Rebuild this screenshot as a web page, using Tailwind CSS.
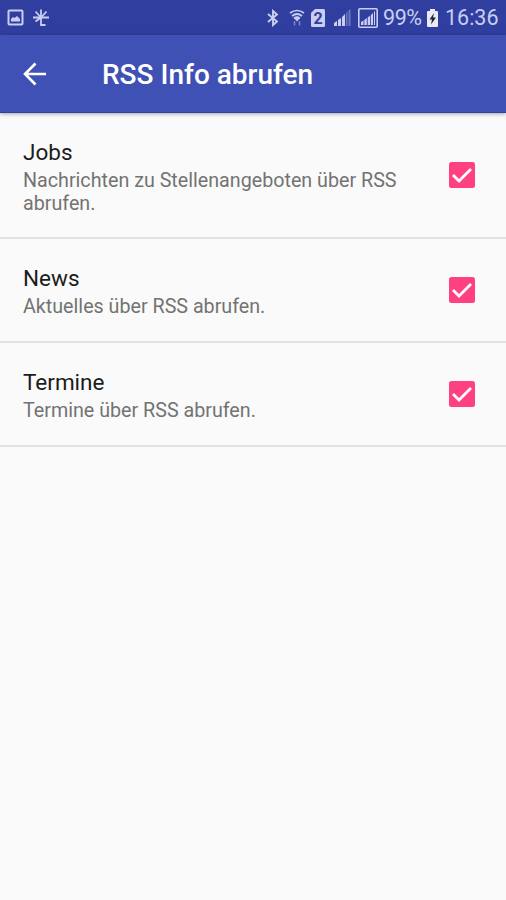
<!DOCTYPE html>
<html lang="de">
<head>
  <meta charset="UTF-8" />
  <meta name="viewport" content="width=device-width, initial-scale=1.0"/>
  <title>RSS Info abrufen</title>
  <script src="https://cdn.jsdelivr.net/npm/@tailwindcss/browser@4"></script>
</head>
<body class="bg-[#fafafa] h-screen overflow-hidden font-['Roboto',sans-serif]">

  <!-- Status Bar -->
  <div class="flex items-center h-[35px] bg-[#303f9f] pl-[7px] pr-[7px] text-[#c9cef0]">
    <svg class="w-[17px] h-[17px]" viewBox="0 0 17 17" fill="none" stroke="currentColor" stroke-width="2">
      <rect x="1.5" y="1.5" width="14" height="14" rx="1"/>
      <path d="M4 12.500V10l2-2 1.500 1L10 7l3 3v2.500z" fill="currentColor" stroke="none"/>
    </svg>
    <svg class="w-[18px] h-[18px] ml-2" viewBox="0 0 18 18" fill="none" stroke="currentColor" stroke-width="1.800">
      <path d="M1 8.500h16M9 .5V16h4.500M3.500 2.500L9 8.500l5.500-6M9 8.500l-5.500 4"/>
    </svg>

    <svg class="w-3 h-[18px] ml-auto" viewBox="0 0 12 18" fill="none" stroke="currentColor" stroke-width="1.900">
      <path d="M1 5l9 7.500-4 3.500V2l4 3.500L1 13"/>
    </svg>
    <svg class="w-4 h-[18px] ml-[10px]" viewBox="0 0 16 18" fill="none" stroke="currentColor" stroke-width="1.700">
      <path d="M1 4q7-5 14 0M3 7q5-4 10 0M5 9.500q3-2.500 6 0"/>
      <path d="M5 9h6l-3 3.500z" fill="currentColor" stroke="none"/>
      <path d="M5.500 12v4.500M10.500 12v4.500" stroke-width="1.500" opacity=".5"/>
    </svg>
    <div class="relative ml-[6px] w-[14px] h-[18px]">
      <svg class="w-[14px] h-[18px]" viewBox="0 0 14 18" fill="currentColor">
        <path d="M4 0h8.500Q14 0 14 1.500v15q0 1.500-1.500 1.500h-11Q0 18 0 16.500V4z"/>
      </svg>
      <span class="absolute inset-0 text-center text-[16px] leading-[19px] font-bold text-[#303f9f]">2</span>
    </div>
    <svg class="w-[17px] h-[17px] ml-[9px]" viewBox="0 0 17 17" fill="currentColor">
      <path d="M0 17v-3l3-2v5zM4 17v-6l3-2v8zM8 17V8l3-3v12z"/>
      <path d="M12 17V4l1.500-1.500V17zM14.500 17V1.500L16.500 0v17z" opacity=".4"/>
    </svg>
    <svg class="w-5 h-5 ml-[7px]" viewBox="0 0 20 20" fill="currentColor">
      <rect x=".8" y=".8" width="18.400" height="18.400" rx="1" fill="none" stroke="currentColor" stroke-width="1.600"/>
      <path d="M3 17v-3l2.500-1.500V17zM6.300 17v-5l2.500-2v7zM9.700 17V9.500l2.500-2V17zM13 17V7l2-2v12zM16 17V4l1-1v14z"/>
    </svg>
    <span class="ml-[5px] w-[41px] pt-px text-[21.500px] leading-none whitespace-nowrap tracking-[-0.4px]">99%</span>
    <svg class="w-[11px] h-[18px] ml-[3px]" viewBox="0 0 11 18">
      <path d="M3 0h5v2h2q1 0 1 1v14q0 1-1 1H1q-1 0-1-1V3q0-1 1-1h2z" fill="#e8eafa"/>
      <path d="M7 4L2.500 10.500H5L4 15.500 9 8.500H6z" fill="#20242f"/>
    </svg>
    <span class="ml-[7px] w-[54px] pt-px text-[21.500px] leading-none whitespace-nowrap">16:36</span>
  </div>

  <!-- App Bar -->
  <div class="flex items-center h-[78px] bg-[#3f51b5] border-b border-[#2b429f] shadow-[0_1px_4px_rgba(0,0,0,0.35)] text-white">
    <svg class="w-6 h-6 ml-[23px]" viewBox="0 0 24 24" fill="none" stroke="currentColor" stroke-width="2.600">
      <path d="M23 12H2M12.500 1.500L2 12l10.500 10.500"/>
    </svg>
    <h1 class="ml-[55px] pt-[2px] text-[28px] leading-8 font-medium">RSS Info abrufen</h1>
  </div>

  <!-- Settings List -->
  <div>
    <label class="flex items-center justify-between h-[126px] pl-[23px] pr-[31px] border-b-2 border-[#e0e0e0]">
      <div class="w-[390px] pt-[3px]">
        <div class="text-[22.500px] leading-[27px] text-[#1c1c1c]">Jobs</div>
        <div class="mt-[3px] text-[19.700px] leading-[23px] text-[#737373]">Nachrichten zu Stellenangeboten über RSS abrufen.</div>
      </div>
      <svg class="w-[26px] h-[26px]" viewBox="0 0 26 26">
        <rect width="26" height="26" rx="2.500" fill="#ff4081"/>
        <path d="M4 13l6 6L22 7" fill="none" stroke="#fff" stroke-width="2.800"/>
      </svg>
    </label>

    <label class="flex items-center justify-between h-[104px] pl-[23px] pr-[31px] border-b-2 border-[#e0e0e0]">
      <div class="pt-[3px]">
        <div class="text-[22.500px] leading-[27px] text-[#1c1c1c]">News</div>
        <div class="mt-[3px] text-[19.700px] leading-[23px] text-[#737373]">Aktuelles über RSS abrufen.</div>
      </div>
      <svg class="w-[26px] h-[26px]" viewBox="0 0 26 26">
        <rect width="26" height="26" rx="2.500" fill="#ff4081"/>
        <path d="M4 13l6 6L22 7" fill="none" stroke="#fff" stroke-width="2.800"/>
      </svg>
    </label>

    <label class="flex items-center justify-between h-[104px] pl-[23px] pr-[31px] border-b-2 border-[#e0e0e0]">
      <div class="pt-[2px]">
        <div class="text-[22.500px] leading-[27px] text-[#1c1c1c]">Termine</div>
        <div class="mt-[3px] text-[19.700px] leading-[23px] text-[#737373]">Termine über RSS abrufen.</div>
      </div>
      <svg class="w-[26px] h-[26px]" viewBox="0 0 26 26">
        <rect width="26" height="26" rx="2.500" fill="#ff4081"/>
        <path d="M4 13l6 6L22 7" fill="none" stroke="#fff" stroke-width="2.800"/>
      </svg>
    </label>
  </div>

</body>
</html>
